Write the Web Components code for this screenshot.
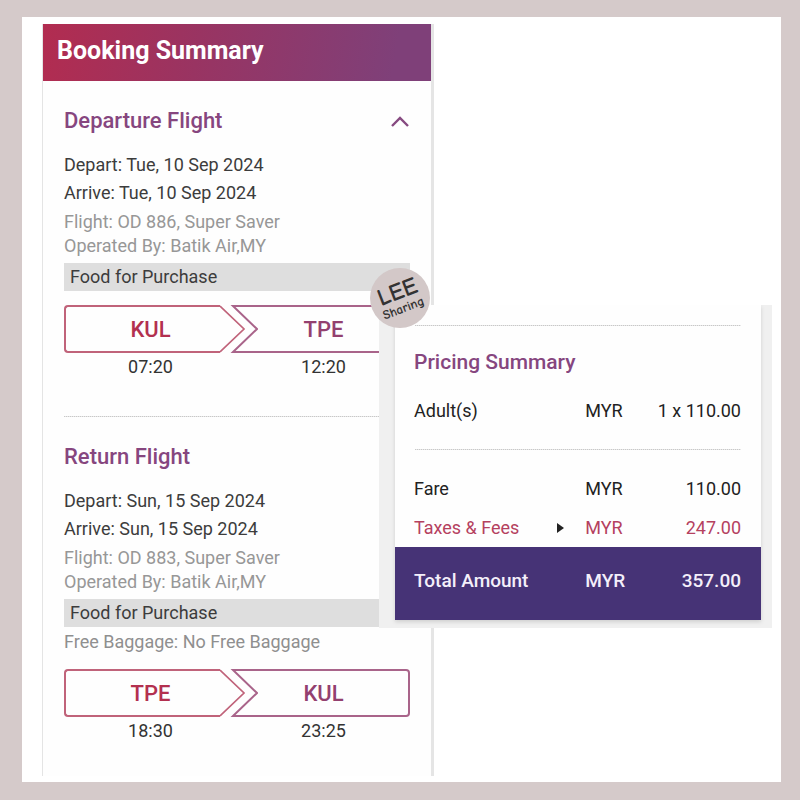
<!DOCTYPE html>
<html lang="en">
<head>
<meta charset="utf-8">
<title>Booking Summary</title>
<style>
body { margin: 0; font-family: Roboto, "Liberation Sans", sans-serif; }
</style>
</head>
<body>
<booking-page></booking-page>

<script>
function define(name, html) {
  const template = document.createElement('template');
  template.innerHTML = html;
  customElements.define(name, class extends HTMLElement {
    constructor() {
      super();
      this.attachShadow({ mode: 'open' }).append(template.content.cloneNode(true));
    }
  });
}

define('dotted-rule', `
<style>
:host { display: block; height: 1px; background: repeating-linear-gradient(90deg, #c8c8c8 0 1px, #e8e8e8 1px 2px); }
</style>`);

define('route-box', `
<style>
:host { display: grid; grid-template-columns: 1fr 1fr; grid-template-rows: 48px 28px; text-align: center; align-items: center; }
.frame { grid-area: 1 / 1 / 2 / 3; display: grid; grid-template-columns: 156fr 38px 152fr; height: 48px; }
.left, .right { border: 2px solid #c0637a; box-sizing: border-box; }
.left { border-right: 0; border-radius: 4px 0 0 4px; }
.right { border-color: #a9648a; border-left: 0; border-radius: 0 4px 4px 0; }
svg { display: block; }
.from, .to { grid-row: 1; padding-top: 2px; font-size: 22px; font-weight: 500; line-height: 28px; }
.from { grid-column: 1; color: #b3304f; }
.to { grid-column: 2; color: #93406f; }
.time { grid-row: 2; font-size: 18px; line-height: 28px; color: #333; }
</style>
<div class="frame">
  <div class="left"></div>
  <svg width="38" height="48" viewBox="0 0 38 48" fill="none">
    <path d="M0 1 L24 24 L0 47" stroke="#c0637a" stroke-width="1.7"/>
    <path d="M38 1 H13 L37 24 L13 47 H38" stroke="#a9648a" stroke-width="2"/>
  </svg>
  <div class="right"></div>
</div>
<div class="from"><slot name="from"></slot></div>
<div class="to"><slot name="to"></slot></div>
<div class="time"><slot name="out"></slot></div>
<div class="time"><slot name="in"></slot></div>`);

define('flight-section', `
<style>
:host { display: block; padding: 26px 21px 0; }
header { display: flex; justify-content: space-between; align-items: center; height: 28px; margin-bottom: 16px; }
h2 { margin: 0; font-size: 22px; line-height: 28px; font-weight: 500; color: #86467f; }
.dates { font-size: 18px; line-height: 28px; color: #3c3c3c; }
.info { margin-top: 3px; font-size: 18px; line-height: 24px; color: #979797; }
.meal { margin-top: 5px; padding-left: 6px; font-size: 18px; line-height: 28px; color: #3c3c3c; background: #dedede; }
.extra { font-size: 18px; line-height: 24px; color: #8f8f8f; }
</style>
<header><h2><slot name="title"></slot></h2><slot name="toggle"></slot></header>
<div class="dates"><slot name="dates"></slot></div>
<div class="info"><slot name="info"></slot></div>
<div class="meal"><slot name="meal"></slot></div>
<div class="extra"><slot name="extra"></slot></div>
<slot></slot>`);

define('booking-summary', `
<style>
:host { display: block; border-left: 1px solid #e4e4e4; border-right: 3px solid #e5e5e5; box-sizing: border-box; background: #fefefe; }
h1 { margin: 0; padding: 13px 14px 16px; font-size: 25px; line-height: 28px; font-weight: 700; color: #fff; background: linear-gradient(100deg, #b22c50, #993462 40%, #7f4079 90%); }
dotted-rule { margin: 35px 21px 0; }
button { border: 0; padding: 0; background: none; display: block; }
button svg { display: block; }
route-box { margin-top: 14px; }
p { margin: 0; }
.bag { padding: 3px 0 1px; }
</style>
<h1>Booking Summary</h1>
<flight-section>
  <span slot="title">Departure Flight</span>
  <button slot="toggle" aria-label="Collapse departure flight"><svg width="20" height="14" viewBox="0 0 20 14" fill="none"><path d="M2 12 L10 4 L18 12" stroke="#864a80" stroke-width="2.4"/></svg></button>
  <p slot="dates">Depart: Tue, 10 Sep 2024</p>
  <p slot="dates">Arrive: Tue, 10 Sep 2024</p>
  <p slot="info">Flight: OD 886, Super Saver</p>
  <p slot="info">Operated By: Batik Air,MY</p>
  <span slot="meal">Food for Purchase</span>
  <route-box><span slot="from">KUL</span><span slot="to">TPE</span><span slot="out">07:20</span><span slot="in">12:20</span></route-box>
</flight-section>
<dotted-rule></dotted-rule>
<flight-section>
  <span slot="title">Return Flight</span>
  <p slot="dates">Depart: Sun, 15 Sep 2024</p>
  <p slot="dates">Arrive: Sun, 15 Sep 2024</p>
  <p slot="info">Flight: OD 883, Super Saver</p>
  <p slot="info">Operated By: Batik Air,MY</p>
  <span slot="meal">Food for Purchase</span>
  <p slot="extra" class="bag">Free Baggage: No Free Baggage</p>
  <route-box><span slot="from">TPE</span><span slot="to">KUL</span><span slot="out">18:30</span><span slot="in">23:25</span></route-box>
</flight-section>`);

define('lee-badge', `
<style>
:host { display: grid; place-content: center; width: 60px; height: 60px; border-radius: 50%; background: #d3c8c8; color: #333; font-family: "Comic Neue", "Comic Sans MS", "Open Sans", sans-serif; text-align: center; }
div { transform: rotate(-21deg); }
b { display: block; font-size: 24px; line-height: 22px; font-weight: 700; }
span { display: block; font-size: 13px; line-height: 14px; font-weight: 700; }
</style>
<div><b>LEE</b><span>Sharing</span></div>`);

define('pricing-summary', `
<style>
:host { display: block; position: relative; padding: 0 11px 8px 16px; background: #f0f0f0; }
.card { background: #fefefe; padding-top: 20px; box-shadow: 0 2px 4px #0002; clip-path: inset(0 -8px -8px -8px); }
.card > dotted-rule { margin: 0 20px 22px; }
h2 { margin: 0 19px 15px; font-size: 21px; line-height: 28px; font-weight: 500; color: #86467f; }
table { width: 100%; table-layout: fixed; border-collapse: collapse; font-size: 18px; line-height: 24px; color: #222; }
col:first-child { width: 52%; }
col:nth-child(2) { width: 15%; }
th, td { height: 39px; padding: 0; font-weight: 400; text-align: left; white-space: nowrap; }
th { padding-left: 19px; }
td:last-child { padding-right: 20px; text-align: right; }
td.rule { padding: 0 20px; }
.tax { color: #b5415f; }
.line { display: flex; justify-content: space-between; align-items: center; }
button { border: 0; background: none; padding: 0; margin-right: 21px; display: block; }
button svg { display: block; }
tfoot { background: #463376; color: #f4effa; font-size: 19px; }
tfoot th, tfoot td { height: 67px; padding-bottom: 6px; font-weight: 500; }
lee-badge { position: absolute; left: -9px; top: -37px; }
</style>
<div class="card">
  <dotted-rule></dotted-rule>
  <h2>Pricing Summary</h2>
  <table>
    <colgroup><col><col><col></colgroup>
    <tbody>
      <tr><th scope="row">Adult(s)</th><td>MYR</td><td>1 x 110.00</td></tr>
      <tr><td class="rule" colspan="3"><dotted-rule></dotted-rule></td></tr>
      <tr><th scope="row">Fare</th><td>MYR</td><td>110.00</td></tr>
      <tr class="tax"><th scope="row"><div class="line">Taxes &amp; Fees<button aria-label="Show taxes and fees"><svg width="7" height="10" viewBox="0 0 7 10"><path d="M0 0 L7 5 L0 10 Z" fill="#222"/></svg></button></div></th><td>MYR</td><td>247.00</td></tr>
    </tbody>
    <tfoot><tr><th scope="row">Total Amount</th><td>MYR</td><td>357.00</td></tr></tfoot>
  </table>
</div>
<lee-badge></lee-badge>`);

define('booking-page', `
<style>
:host { display: block; box-sizing: border-box; min-height: 100vh; padding: 17px 19px 18px 22px; background: #d5caca; }
main { display: grid; grid-template-columns: 337fr 55fr 338fr; padding: 7px 9px 6px 20px; background: #fff; }
booking-summary { grid-area: 1 / 1 / 2 / 3; padding-bottom: 31px; }
pricing-summary { grid-area: 1 / 2 / 2 / 4; align-self: start; margin-top: 281px; }
</style>
<main>
  <booking-summary></booking-summary>
  <pricing-summary></pricing-summary>
</main>`);
</script>
</body>
</html>
